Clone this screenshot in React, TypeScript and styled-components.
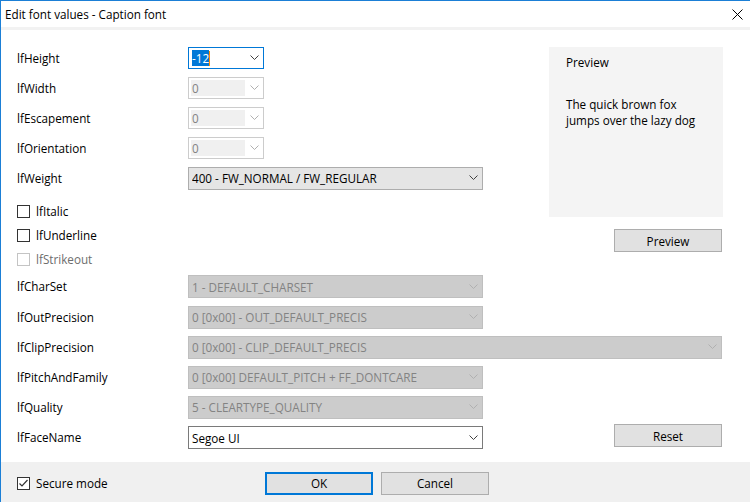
import React from "react";
import styled, { createGlobalStyle, css } from "styled-components";

const Global = createGlobalStyle`
  html, body { margin: 0; padding: 0; background: #ffffff; overflow: hidden; }
  body { font-family: "Segoe UI", "Open Sans", "Noto Sans", sans-serif; font-size: 11.7px; color: #000; }
  * { box-sizing: border-box; }
`;

const Window = styled.div`
  width: 750px;
  height: 502px;
  border-top: 1px solid #1b7fd6;
  border-left: 1px solid #1b7fd6;
  display: flex;
  flex-direction: column;
  background: #fff;
`;

const TitleBar = styled.div`
  height: 26px;
  display: flex;
  align-items: center;
  justify-content: space-between;
  padding: 0 7px 0 4px;
  background: #fff;
  line-height: 16px;
`;

const TitleBand = styled.div`
  height: 3px;
  background: #f2f2f2;
`;

const Content = styled.div`
  flex: 1;
  padding: 13px 0 9px 16px;
  display: grid;
  grid-template-columns: 171px 295px 66px 174px;
  grid-template-rows: 30px 30px 30px 30px 30px 30px 24px 24px 31px 30px 30px 30px 30px 31px;
  align-items: center;
`;

const Label = styled.div<{ $row: number }>`
  grid-column: 1;
  grid-row: ${(p) => p.$row};
  line-height: 16px;
  margin-top: -1px;
`;

type Variant = "focus" | "disabledEdit" | "list" | "disabledList" | "white";

const Combo = styled.div<{ $row: number; $variant: Variant; $span?: boolean; $w?: number }>`
  grid-row: ${(p) => p.$row};
  grid-column: ${(p) => (p.$span ? "2 / 5" : "2")};
  width: ${(p) => (p.$w ? `${p.$w}px` : p.$span ? "534px" : "295px")};
  height: ${(p) => (p.$variant === "focus" || p.$variant === "disabledEdit" ? "22px" : "23px")};
  display: flex;
  align-items: center;
  position: relative;
  padding: 0 0 0 3px;
  line-height: 16px;
  ${(p) => {
    switch (p.$variant) {
      case "focus":
        return css`border: 1px solid #0078d7; background: #fff;`;
      case "disabledEdit":
        return css`border: 1px solid #cccccc; background: #fff; color: #838383; padding: 2px 0 2px 2px;`;
      case "list":
        return css`border: 1px solid #adadad; background: #e5e5e5;`;
      case "disabledList":
        return css`border: 1px solid #bfbfbf; background: #cccccc; color: #838383;`;
      default:
        return css`border: 1px solid #7a7a7a; background: #fff;`;
    }
  }}
`;

const ComboText = styled.span`
  flex: 1;
  white-space: nowrap;
  overflow: hidden;
`;

const DisabledEditArea = styled.span`
  width: 54px;
  height: 100%;
  background: #f0f0f0;
  display: flex;
  align-items: center;
  padding-left: 1px;
`;

const Selected = styled.span`
  background: #0078d7;
  color: #fff;
`;

const Caret = styled.span`
  display: inline-block;
  width: 1px;
  height: 15px;
  background: #ff8a00;
  vertical-align: middle;
  margin-top: -2px;
`;

const ArrowWrap = styled.span`
  position: absolute;
  right: 4px;
  top: 50%;
  margin-top: -3px;
  width: 9px;
  height: 5px;
  display: flex;
`;

const Chevron: React.FC<{ color: string }> = ({ color }) => (
  <ArrowWrap>
    <svg width="9" height="5" viewBox="0 0 9 5">
      <path d="M0.5 0.5 L4.5 4.5 L8.5 0.5" fill="none" stroke={color} strokeWidth="1" />
    </svg>
  </ArrowWrap>
);

const CheckRow = styled.div<{ $row: number; $disabled?: boolean }>`
  grid-row: ${(p) => p.$row};
  grid-column: 1 / 3;
  height: 24px;
  display: flex;
  align-items: center;
  gap: 6px;
  line-height: 16px;
  color: ${(p) => (p.$disabled ? "#6d6d6d" : "#000")};
  align-self: end;
`;

const Box = styled.span<{ $disabled?: boolean }>`
  width: 13px;
  height: 13px;
  border: 1px solid ${(p) => (p.$disabled ? "#c4c4c4" : "#333333")};
  background: #fff;
  display: flex;
  align-items: center;
  justify-content: center;
  flex-shrink: 0;
`;

const PreviewPanel = styled.div`
  grid-column: 4;
  grid-row: 1 / 7;
  align-self: start;
  margin-top: 4px;
  height: 170px;
  background: #f4f4f4;
  padding: 7px 17px;
  line-height: 16px;
`;

const PreviewTitle = styled.div`
  margin-bottom: 26px;
`;

const Button = styled.button<{ $default?: boolean }>`
  width: 108px;
  height: 23px;
  font: inherit;
  color: #000;
  background: #e1e1e1;
  border: ${(p) => (p.$default ? "2px solid #0078d7" : "1px solid #adadad")};
  padding: 0;
  line-height: 16px;
  cursor: default;
`;

const SideButton = styled(Button)<{ $row: string; $mt: number }>`
  grid-column: 4;
  grid-row: ${(p) => p.$row};
  justify-self: end;
  align-self: start;
  margin-top: ${(p) => p.$mt}px;
  margin-right: 1px;
`;

const Footer = styled.div`
  height: 40px;
  background: #f0f0f0;
  display: flex;
  align-items: center;
  padding: 2px 0 0 16px;
`;

const SecureCheck = styled.div`
  width: 248px;
  display: flex;
  align-items: center;
  gap: 6px;
  line-height: 16px;
`;

const ButtonGroup = styled.div`
  display: flex;
  gap: 8px;
`;

const CloseIcon = () => (
  <svg width="11" height="11" viewBox="0 0 11 11">
    <path d="M0.5 0.5 L10.5 10.5 M10.5 0.5 L0.5 10.5" stroke="#000" strokeWidth="1" fill="none" />
  </svg>
);

const CheckMark = () => (
  <svg width="11" height="11" viewBox="0 0 11 11">
    <path d="M1.5 5.5 L4 8 L9.5 2" stroke="#333" strokeWidth="1.2" fill="none" />
  </svg>
);

const DARK = "#404040";
const LIGHT = "#b0b0b0";

export default function App() {
  return (
    <>
      <Global />
      <Window>
        <TitleBar>
          <span>Edit font values - Caption font</span>
          <CloseIcon />
        </TitleBar>
        <TitleBand />
        <Content>
          <Label $row={1}>lfHeight</Label>
          <Combo $row={1} $variant="focus" $w={76}>
            <ComboText>
              <Selected>-12</Selected>
              <Caret />
            </ComboText>
            <Chevron color={DARK} />
          </Combo>

          <Label $row={2}>lfWidth</Label>
          <Combo $row={2} $variant="disabledEdit" $w={76}>
            <DisabledEditArea>0</DisabledEditArea>
            <Chevron color={LIGHT} />
          </Combo>

          <Label $row={3}>lfEscapement</Label>
          <Combo $row={3} $variant="disabledEdit" $w={76}>
            <DisabledEditArea>0</DisabledEditArea>
            <Chevron color={LIGHT} />
          </Combo>

          <Label $row={4}>lfOrientation</Label>
          <Combo $row={4} $variant="disabledEdit" $w={76}>
            <DisabledEditArea>0</DisabledEditArea>
            <Chevron color={LIGHT} />
          </Combo>

          <Label $row={5}>lfWeight</Label>
          <Combo $row={5} $variant="list">
            <ComboText>400 - FW_NORMAL / FW_REGULAR</ComboText>
            <Chevron color={DARK} />
          </Combo>

          <CheckRow $row={6}>
            <Box />
            <span>lfItalic</span>
          </CheckRow>
          <CheckRow $row={7}>
            <Box />
            <span>lfUnderline</span>
          </CheckRow>
          <CheckRow $row={8} $disabled>
            <Box $disabled />
            <span>lfStrikeout</span>
          </CheckRow>

          <Label $row={9}>lfCharSet</Label>
          <Combo $row={9} $variant="disabledList">
            <ComboText>1 - DEFAULT_CHARSET</ComboText>
            <Chevron color={LIGHT} />
          </Combo>

          <Label $row={10}>lfOutPrecision</Label>
          <Combo $row={10} $variant="disabledList">
            <ComboText>0 [0x00] - OUT_DEFAULT_PRECIS</ComboText>
            <Chevron color={LIGHT} />
          </Combo>

          <Label $row={11}>lfClipPrecision</Label>
          <Combo $row={11} $variant="disabledList" $span>
            <ComboText>0 [0x00] - CLIP_DEFAULT_PRECIS</ComboText>
            <Chevron color={LIGHT} />
          </Combo>

          <Label $row={12}>lfPitchAndFamily</Label>
          <Combo $row={12} $variant="disabledList">
            <ComboText>0 [0x00] DEFAULT_PITCH + FF_DONTCARE</ComboText>
            <Chevron color={LIGHT} />
          </Combo>

          <Label $row={13}>lfQuality</Label>
          <Combo $row={13} $variant="disabledList">
            <ComboText>5 - CLEARTYPE_QUALITY</ComboText>
            <Chevron color={LIGHT} />
          </Combo>

          <Label $row={14}>lfFaceName</Label>
          <Combo $row={14} $variant="white">
            <ComboText>Segoe UI</ComboText>
            <Chevron color={DARK} />
          </Combo>

          <PreviewPanel>
            <PreviewTitle>Preview</PreviewTitle>
            <div>The quick brown fox</div>
            <div>jumps over the lazy dog</div>
          </PreviewPanel>

          <SideButton $row="7 / 9" $mt={6}>Preview</SideButton>
          <SideButton $row="14" $mt={2}>Reset</SideButton>
        </Content>
        <Footer>
          <SecureCheck>
            <Box>
              <CheckMark />
            </Box>
            <span>Secure mode</span>
          </SecureCheck>
          <ButtonGroup>
            <Button $default>OK</Button>
            <Button>Cancel</Button>
          </ButtonGroup>
        </Footer>
      </Window>
    </>
  );
}
